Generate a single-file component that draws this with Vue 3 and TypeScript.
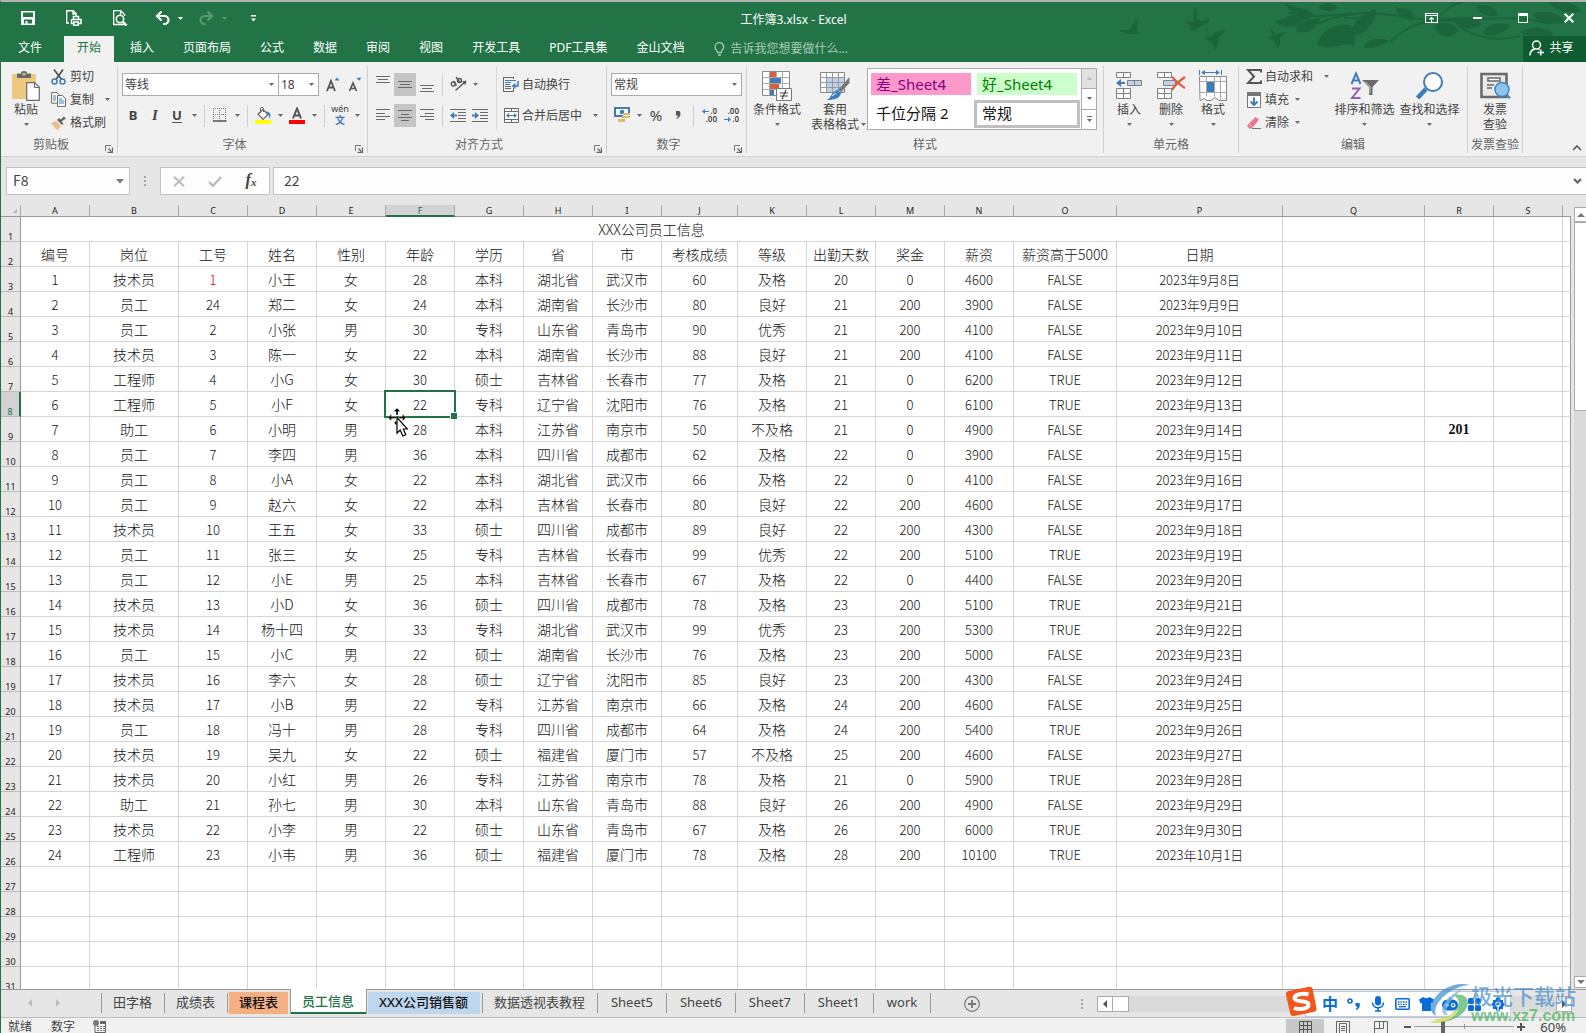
<script setup lang="ts">
import { h, ref, type FunctionalComponent } from 'vue'

interface Glyph { w: number; h: number; body: string }

const G = '#6a6a6a'
const B = '#3f7cba'

const glyphs: Record<string, Glyph> = {
  save: { w: 14, h: 14, body: '<path fill="#fff" fill-rule="evenodd" d="M0 0h14v14H0zM2 1.500v4.500h10v-4.500zM3 8.500v4h1.500v-2.500h2v2.500h4.500v-4z"/>' },
  print: { w: 16, h: 16, body: '<path d="M3 13H.7V.7h6.500l3 3V6M7 .7V4h3" fill="none" stroke="#fff" stroke-width="1.400"/><path d="M7.500 9V6.500h5V9M5.500 9.500h9.500v4H13M7.500 13.500h-2v-4M7.800 12h4.500v3.300H7.800z" fill="none" stroke="#fff" stroke-width="1.500"/>' },
  preview: { w: 15, h: 16, body: '<path d="M12 14.500H.7V.7h7l4 4V6M7.500.7v4" fill="none" stroke="#fff" stroke-width="1.300"/><circle cx="7" cy="9" r="3.700" fill="none" stroke="#fff" stroke-width="1.600"/><path d="M9.600 11.600l4 4" stroke="#fff" stroke-width="2.400"/>' },
  undo: { w: 15, h: 14, body: '<path d="M2 5h7.500a4 4 0 0 1 0 8H8" fill="none" stroke="#fff" stroke-width="2.200"/><path d="M6.500.5L2 5l4.500 4.500" fill="none" stroke="#fff" stroke-width="2.200"/>' },
  redo: { w: 15, h: 14, body: '<g opacity=".25"><path d="M13 5H5.500a4 4 0 0 0 0 8H7" fill="none" stroke="#fff" stroke-width="2.200"/><path d="M8.500.5L13 5 8.500 9.500" fill="none" stroke="#fff" stroke-width="2.200"/></g>' },
  customize: { w: 5, h: 7, body: '<path d="M0 0h5v1.400H0zM0 3.500h5L2.500 6.500z" fill="#fff"/>' },
  ribbonOpts: { w: 13, h: 10, body: '<path d="M.5.5h12v9H.5zM.5 2.500h12M6.500 9V4.500M4.300 6.500l2.200-2 2.200 2" fill="none" stroke="#fff" stroke-width="1.200"/>' },
  minimize: { w: 9, h: 2, body: '<path fill="#fff" d="M0 0h9v2H0z"/>' },
  maximize: { w: 10, h: 10, body: '<path fill="#fff" fill-rule="evenodd" d="M0 0h10v10H0zM1 3v6h8V3z"/>' },
  close: { w: 10, h: 10, body: '<path stroke="#fff" stroke-width="2" d="M.7.7l8.600 8.600M9.300.7L.7 9.300"/>' },
  bulb: { w: 11, h: 14, body: '<path d="M3.500 10.500c0-2-2.500-2.800-2.500-5.500a4.300 4.300 0 0 1 8.700 0c0 2.700-2.500 3.500-2.500 5.500zM4 13h3" fill="none" stroke="#a9cbb7" stroke-width="1.300"/>' },
  person: { w: 16, h: 16, body: '<circle cx="7.500" cy="5" r="4" fill="none" stroke="#fff" stroke-width="1.500"/><path d="M1 15.500c0-4 2.500-6 5-6.500M9.500 9l1 .8M8.500 12.500H15M11.800 9.500v6" fill="none" stroke="#fff" stroke-width="1.500"/>' },
  paste: { w: 28, h: 30, body: `<path d="M0 3h24v25H0z" fill="#edc87e"/><path d="M5 2.500h4c0-3.200 6-3.200 6 0h4V7H5z" fill="${G}"/><path d="M10.500 2.200h3v2h-3z" fill="#edc87e"/><path d="M14.700 11.700h8l4.600 4.600v13H14.700z" fill="#fff" stroke="${G}" stroke-width="1.200"/><path d="M22.500 12v4.500h4.500" fill="none" stroke="${G}"/>` },
  cut: { w: 16, h: 16, body: `<path d="M3 .5l7.500 10M12 .5l-7 10" stroke="#555" stroke-width="1.800"/><circle cx="3.500" cy="12.500" r="2.500" fill="none" stroke="${B}" stroke-width="1.500"/><circle cx="11.500" cy="12.500" r="2.500" fill="none" stroke="${B}" stroke-width="1.500"/>` },
  copy: { w: 16, h: 15, body: `<path d="M.6.6h5.500l2.500 2.500v8H.6z" fill="#fff" stroke="${G}"/><path d="M2 4h3M2 6h3M2 8h3" stroke="${B}"/><path d="M6.500 3.500h5l3 3v7.900h-8z" fill="#fff" stroke="${G}"/><path d="M8 7h3M8 9h5M8 11h5" stroke="${B}"/>` },
  brush: { w: 16, h: 14, body: '<path d="M0 7l5-2 5 5-3 4-2-1-1-1z" fill="#edc087"/><path d="M6 4l5 5 1.500-1.500-2-2L15 2.500 13 .5 9.500 3.500 8 2z" fill="#666"/>' },
  growA: { w: 14, h: 15, body: `<path d="M1 14L5 4l4 10M2.500 10.500h5" fill="none" stroke="#555" stroke-width="1.800"/><path d="M8.500 3.500h5L11 .5z" fill="${B}"/>` },
  shrinkA: { w: 14, h: 15, body: `<path d="M1.500 14L5 6l3.500 8M3 11.500h4" fill="none" stroke="#555" stroke-width="1.700"/><path d="M8.500.8h5L11 3.800z" fill="${B}"/>` },
  border: { w: 14, h: 14, body: `<path d="M.5 0v13M6.500 0v13M12.500 0v13M0 .5h13M0 6.500h13" stroke="#777" stroke-dasharray="1 1" shape-rendering="crispEdges"/><path d="M0 13h13.500" stroke="#555" stroke-width="1.500"/>` },
  fill: { w: 16, h: 17, body: `<path d="M3 7l5-4.500 5 5L8 12.500z" fill="#fff" stroke="#666" stroke-width="1.200"/><path d="M5.500 6V1.800a1.500 1.500 0 0 1 3 0V5" fill="none" stroke="#666"/><path d="M11 4.500c5 0 5 4 4 6.500-1.500-1-.5-4-4-5z" fill="${B}"/><path d="M0 13h16v4H0z" fill="#ff0"/>` },
  fontColor: { w: 16, h: 17, body: '<path d="M4 11.500L8 1.500l4 10M5.500 8.500h5" fill="none" stroke="#555" stroke-width="2"/><path d="M0 13h16v4H0z" fill="#f00"/>' },
  alTop: { w: 14, h: 9, body: `<path d="M0 1.500h14M2 4.500h10M0 7.500h14" stroke="${G}" shape-rendering="crispEdges"/>` },
  alLeft: { w: 14, h: 12, body: `<path d="M0 .5h14M0 4.500h9M0 7.500h14M0 10.500h9" stroke="${G}" shape-rendering="crispEdges"/>` },
  alCenter: { w: 14, h: 12, body: `<path d="M0 .5h14M3 4.500h8M0 7.500h14M3 10.500h8" stroke="${G}" shape-rendering="crispEdges"/>` },
  alRight: { w: 14, h: 12, body: `<path d="M0 .5h14M5 4.500h9M0 7.500h14M5 10.500h9" stroke="${G}" shape-rendering="crispEdges"/>` },
  orient: { w: 17, h: 16, body: '<g fill="none" stroke="#555" stroke-width="1.400"><circle cx="3.300" cy="8" r="2"/><path d="M3.500 5l3 4.500M6 1l4 5.500"/><circle cx="9.500" cy="4.500" r="2"/><path d="M5.500 14.500L15 6"/></g><path d="M16.500 4.500l-4.500 1 3.500 3.500z" fill="#555"/>' },
  outdent: { w: 16, h: 13, body: `<path d="M0 .5h16M8 3.500h8M8 6.500h8M8 9.500h8M0 12.500h16" stroke="${G}" shape-rendering="crispEdges"/><path d="M0 6.500L4 3v2.500h3v2H4V10z" fill="${B}"/>` },
  indent: { w: 16, h: 13, body: `<path d="M0 .5h16M8 3.500h8M8 6.500h8M8 9.500h8M0 12.500h16" stroke="${G}" shape-rendering="crispEdges"/><path d="M7 6.500L3 3v2.500H0v2h3V10z" fill="${B}"/>` },
  wrap: { w: 16, h: 15, body: `<path d="M.5 0v15M10.500 0v2M10.500 11v4M0 .5h11M0 14.500h11M2 9.500h6M2 11.500h6M2 7.500h5" stroke="${G}" fill="none"/><path d="M2 3.500h11M2 5.500h6" stroke="${B}"/><path d="M15 4v5h-4" fill="none" stroke="${B}" stroke-width="1.600"/><path d="M8.500 9l4-3v6z" fill="${B}"/>` },
  merge: { w: 15, h: 15, body: `<path d="M.5.5h14v14H.5zM0 3.500h15M0 11.500h15M7.500 0v3.500M7.500 11.500V15" fill="#fff" stroke="${G}"/><path d="M3 7.500h9" stroke="${B}"/><path d="M2 7.500L5 5v5zM13 7.500L10 5v5z" fill="${B}"/>` },
  currency: { w: 16, h: 16, body: `<path d="M1 1h14v8H1z" fill="#fff" stroke="${B}" stroke-width="2"/><circle cx="8" cy="5" r="2.300" fill="${B}"/><path d="M9 6h7v2H9zM8 9h7v2H8zM4 12h7v3H4z" fill="#e6b866"/><path d="M9 8.500h7M7.500 11.500h7M4 15.500h7" stroke="#f1f1f1"/>` },
  comma: { w: 6, h: 8, body: '<path d="M1 0h3.500C6.500 2 5.500 6 2 8l-.6-.8C3 6 3.200 5 3 4.500H1z" fill="#555"/>' },
  arrowL: { w: 7, h: 5, body: `<path d="M0 2.500L3 0v2h4v1H3v2z" fill="${B}"/>` },
  arrowR: { w: 7, h: 5, body: `<path d="M7 2.500L4 0v2H0v1h4v2z" fill="${B}"/>` },
  condFmt: { w: 30, h: 30, body: '<path d="M.5.500h27v24H.5z" fill="#fff" stroke="#888"/><path d="M.5 6.500h27M.5 12.500h27M.5 18.500h27M7.500.5v24M20.500.5v24M14.500.5v24" stroke="#aaa"/><path d="M8 1h6v5H8zM8 13h9v5H8z" fill="#d9603f"/><path d="M8 7h11v5H8zM8 19h4v5H8z" fill="#3f7cba"/><path d="M14.500 17.500h15v12h-15z" fill="#fff" stroke="#777"/><path d="M18 22h8M18 25h8M24 19l-4 9" stroke="#444" stroke-width="1.200"/>' },
  tableFmt: { w: 30, h: 28, body: '<path d="M.5.500h24v20H.5z" fill="#fff" stroke="#888"/><path d="M7 6h17v14H7z" fill="#bdd2ea"/><path d="M.5 5.500h24M.5 10.500h24M.5 15.500h24M6.500.5v20M12.500.5v20M18.500.5v20" stroke="#999"/><path d="M29.500 5v6L21 20l-3-2z" fill="#777"/><path d="M17 18l4 3c-1 5-6 7-14 7 5-3 4-8 10-10z" fill="#3f7cba"/><path d="M12 24l4-3" stroke="#fff"/>' },
  insertCells: { w: 26, h: 28, body: `<g fill="#fff" stroke="#808080"><path d="M.5.500h14v5H.5zM7.500.5v5M.5 16.500h14v10H.5zM7.500 16.500v10M.5 21.500h14"/><path d="M11.500 8.500h14v5h-14zM18.500 8.500v5" fill="#bdd2ea"/></g><path d="M0 11L5 7v3h4v2H5v3z" fill="${B}"/>` },
  deleteCells: { w: 29, h: 28, body: `<g fill="#fff" stroke="#808080"><path d="M.5.500h14v5H.5zM7.500.5v5M.5 16.500h14v10H.5zM7.500 16.500v10M.5 21.500h14"/><path d="M6.500 8.500h12v5h-12z" fill="#bdd2ea"/></g><path d="M15 5c5 5 9 9 13 11M28 5c-6 4-10 8-13 13" fill="none" stroke="#d9603f" stroke-width="2.400"/>` },
  formatCells: { w: 28, h: 32, body: `<path d="M.5 0v5M22.500 0v5" stroke="${B}"/><path d="M4 2.500h15" stroke="${B}"/><path d="M2 2.500L6 0v5zM21 2.500L17 0v5z" fill="${B}"/><path d="M.5 6.500h27v24H20l-4-3-4 3H8l-3-2-4 2z" fill="#fff" stroke="#888"/><path d="M.5 11.500h27M.5 22.500h27M7.500 6.500v20M15.500 6.500v20M21.500 6.500v24" stroke="#aaa"/><path d="M8 12h7v10H8z" fill="${B}"/>` },
  sum: { w: 16, h: 15, body: '<path d="M15 3.500V1H2l6 6.500L2 14h13v-2.500" fill="none" stroke="#555" stroke-width="2"/>' },
  fillDown: { w: 14, h: 16, body: `<path d="M.5.500h13v15H.5z" fill="#fff" stroke="#777"/><path d="M0 0h14v4H0z" fill="#777"/><path d="M7 5.500v7M3.500 9.500L7 13l3.500-3.500" fill="none" stroke="${B}" stroke-width="2"/>` },
  erase: { w: 14, h: 14, body: '<path d="M0 9.500L8.500 1 12 3.500 5 12.500H2z" fill="#e5798d"/><path d="M2 8l3.500 3" stroke="#f4c0c8"/><path d="M5 12.500h9" stroke="#777"/>' },
  sortFilter: { w: 30, h: 28, body: `<path d="M1.500 12L6 1.500 10.500 12M3 8.500h6" fill="none" stroke="${B}" stroke-width="2"/><path d="M2 16.500h7.500L2 26h8.500" fill="none" stroke="#9160b5" stroke-width="2"/><path d="M12 8h17l-6.500 7v8h-3.500v-8z" fill="#6a6a6a"/><path d="M15 9.500l5 5v7" fill="none" stroke="#ccc"/>` },
  find: { w: 28, h: 28, body: `<circle cx="17" cy="10" r="9" fill="#fff" stroke="${B}" stroke-width="2"/><path d="M10 17l-8.500 9" stroke="${B}" stroke-width="4.500"/>` },
  invoice: { w: 31, h: 27, body: '<path d="M1.500 1.500h25v23h-25z" fill="#e8e8e8" stroke="#6a6a6a" stroke-width="2.600"/><path d="M3.500 3v20" stroke="#fff" stroke-dasharray="2 2"/><path d="M8 5.500h12v3H8z" fill="#fff" stroke="#6a6a6a" stroke-width="1.600"/><path d="M7 12.500h7M7 15.500h5" stroke="#6a6a6a" stroke-width="1.400"/><circle cx="22" cy="17" r="7" fill="#8fc4f0" stroke="#3e86bd" stroke-width="1.500"/><path d="M27 22l3 4" stroke="#3e86bd" stroke-width="2"/>' },
  launcher: { w: 8, h: 8, body: '<path d="M.5 6V.5H6" fill="none" stroke="#777"/><path d="M7.500 2.500v5h-5M3.500 3.500l3 3" fill="none" stroke="#666" stroke-width="1.400"/>' },
  caretUp: { w: 10, h: 6, body: '<path d="M1 5l4-4 4 4" fill="none" stroke="#555" stroke-width="1.600"/>' },
  caretDown: { w: 9, h: 6, body: '<path d="M1 1l3.500 3.500L8 1" fill="none" stroke="#666" stroke-width="2.200"/>' },
  cancel: { w: 12, h: 11, body: '<path d="M1 .8l10 9.400M11 .8L1 10.200" stroke="#bbb" stroke-width="2"/>' },
  confirm: { w: 14, h: 11, body: '<path d="M1 6l4 3.800L13 1" fill="none" stroke="#bbb" stroke-width="2.400"/>' },
  status: { w: 13, h: 13, body: '<path d="M2 5v7.500h10.500V1.500H8" fill="none" stroke="#666"/><path d="M7 1h6v3H7z" fill="#666"/><circle cx="3" cy="3" r="3" fill="#777"/><path d="M4 6.500h8M4 8.500h8M4 10.500h8" stroke="#777" stroke-dasharray="2 1"/>' },
  viewNormal: { w: 13, h: 13, body: '<path d="M.5.500h12v12H.5zM4.500.5v12M8.500.5v12M.5 4.500h12M.5 8.500h12" fill="none" stroke="#555"/>' },
  viewPage: { w: 14, h: 13, body: '<path d="M.5.500h13v12H.5z" fill="none" stroke="#666"/><path d="M3.500 2.500h7v10h-7zM5 5.500h4M5 7.500h4M5 9.500h4" fill="none" stroke="#666"/>' },
  viewBreak: { w: 14, h: 13, body: '<path d="M.5 13V.5h13V13M5.500.5v7M9.500.5v7M.5 7.500h9" fill="none" stroke="#666"/>' },
  plus: { w: 16, h: 16, body: '<circle cx="8" cy="8" r="7.300" fill="none" stroke="#777" stroke-width="1.200"/><path d="M4 8h8M8 4v8" stroke="#777" stroke-width="1.800"/>' },
  imeLogo: { w: 32, h: 31, body: '<path d="M4 5L24 .8q3-.6 3.600 2.200L31.500 22q.5 3-2.400 3.700L9 30q-3 .6-3.700-2.200L.9 8.500Q.5 5.700 4 5z" fill="#f4551c"/><path d="M23.500 8.500C18 6.500 9 8.500 9.500 12.500S23 14 23.500 18.500 14 24 9 22" fill="none" stroke="#fff" stroke-width="4"/>' },
  imePunct: { w: 14, h: 14, body: '<circle cx="3" cy="4" r="2" fill="none" stroke="#0a6cd6" stroke-width="1.600"/><path d="M8.500 6h4c1 3 0 5.500-3 7l-.8-1c1-.6 1.600-1.500 1.500-2.500H8.500z" fill="#0a6cd6"/>' },
  imeMic: { w: 14, h: 16, body: '<rect x="4" y="0" width="6" height="9.500" rx="3" fill="#0a6cd6"/><path d="M1.500 6.500c0 7 11 7 11 0M7 12v3M4 15h6" fill="none" stroke="#0a6cd6" stroke-width="1.600"/>' },
  imeKeys: { w: 15, h: 12, body: '<rect x=".8" y=".8" width="13.400" height="10.400" rx="1" fill="none" stroke="#0a6cd6" stroke-width="1.600"/><path d="M3 4h9M3 6.300h9" stroke="#0a6cd6" stroke-width="1.300" stroke-dasharray="1.500 1"/><path d="M4 8.700h7" stroke="#0a6cd6" stroke-width="1.300"/>' },
  imeShirt: { w: 15, h: 14, body: '<path d="M4.500 0q3 2.500 6 0L15 2.500 13.500 6.500 12 6v8H3V6l-1.500.5L0 2.500z" fill="#0a6cd6"/>' },
  imeBot: { w: 16, h: 14, body: '<path d="M7.200 0h1.600v3H7.200z" fill="#0a6cd6"/><rect x="0" y="2.500" width="16" height="11" rx="5.500" fill="#0a6cd6"/><path d="M2.800 8.200h4M4.800 6.200v4" stroke="#fff" stroke-width="1.200"/><circle cx="11.200" cy="8.200" r="1.700" fill="none" stroke="#fff" stroke-width="1.200"/>' },
  imeGrid: { w: 13, h: 13, body: '<rect width="6" height="6" rx="1.500" fill="#0a6cd6"/><circle cx="10" cy="3" r="3" fill="#0a6cd6"/><rect y="7" width="6" height="6" rx="1.500" fill="#0a6cd6"/><rect x="7" y="7" width="6" height="6" rx="1.500" fill="#0a6cd6"/>' },
  imeGear: { w: 14, h: 15, body: '<path d="M5 1l2-1 2 1 .5 2h2.500v2.500L14 7.500 12 9.500V12H9.500L8 14.500H6L4.500 12H2V9.500L0 7.500l2-2V3h2.500z" fill="#0a6cd6"/><path d="M7 14V8M4.800 8a2.300 2.300 0 1 1 4.400 0L7 10z" fill="none" stroke="#fff" stroke-width="1.200"/>' },
}

const Icon: FunctionalComponent<{ name: string }> = (props) => {
  const g = glyphs[props.name]
  return h('svg', { width: g.w, height: g.h, viewBox: `0 0 ${g.w} ${g.h}`, 'aria-hidden': 'true', innerHTML: g.body })
}
Icon.props = ['name']

const Arrow: FunctionalComponent = () =>
  h('svg', { width: 5, height: 3, viewBox: '0 0 5 3', 'aria-hidden': 'true', innerHTML: '<path d="M0 0h5L2.500 3z" fill="currentColor"/>' })

const menuTabs = ['文件', '开始', '插入', '页面布局', '公式', '数据', '审阅', '视图', '开发工具', 'PDF工具集', '金山文档']
const activeMenu = ref('开始')

const columns = [
  ['A', 69], ['B', 89], ['C', 69], ['D', 69], ['E', 69], ['F', 69], ['G', 69], ['H', 69], ['I', 69], ['J', 76],
  ['K', 69], ['L', 69], ['M', 69], ['N', 69], ['O', 103], ['P', 166], ['Q', 142], ['R', 69], ['S', 69],
] as [string, number][]

const heads = '编号 岗位 工号 姓名 性别 年龄 学历 省 市 考核成绩 等级 出勤天数 奖金 薪资 薪资高于5000 日期'
const records = `1 技术员 1 小王 女 28 本科 湖北省 武汉市 60 及格 20 0 4600 FALSE 2023年9月8日
2 员工 24 郑二 女 24 本科 湖南省 长沙市 80 良好 21 200 3900 FALSE 2023年9月9日
3 员工 2 小张 男 30 专科 山东省 青岛市 90 优秀 21 200 4100 FALSE 2023年9月10日
4 技术员 3 陈一 女 22 本科 湖南省 长沙市 88 良好 21 200 4100 FALSE 2023年9月11日
5 工程师 4 小G 女 30 硕士 吉林省 长春市 77 及格 21 0 6200 TRUE 2023年9月12日
6 工程师 5 小F 女 22 专科 辽宁省 沈阳市 76 及格 21 0 6100 TRUE 2023年9月13日
7 助工 6 小明 男 28 本科 江苏省 南京市 50 不及格 21 0 4900 FALSE 2023年9月14日
8 员工 7 李四 男 36 本科 四川省 成都市 62 及格 22 0 3900 FALSE 2023年9月15日
9 员工 8 小A 女 22 本科 湖北省 武汉市 66 及格 22 0 4100 FALSE 2023年9月16日
10 员工 9 赵六 女 22 本科 吉林省 长春市 80 良好 22 200 4600 FALSE 2023年9月17日
11 技术员 10 王五 女 33 硕士 四川省 成都市 89 良好 22 200 4300 FALSE 2023年9月18日
12 员工 11 张三 女 25 专科 吉林省 长春市 99 优秀 22 200 5100 TRUE 2023年9月19日
13 员工 12 小E 男 25 本科 吉林省 长春市 67 及格 22 0 4400 FALSE 2023年9月20日
14 技术员 13 小D 女 36 硕士 四川省 成都市 78 及格 23 200 5100 TRUE 2023年9月21日
15 技术员 14 杨十四 女 33 专科 湖北省 武汉市 99 优秀 23 200 5300 TRUE 2023年9月22日
16 员工 15 小C 男 22 硕士 湖南省 长沙市 76 及格 23 200 5000 FALSE 2023年9月23日
17 技术员 16 李六 女 28 硕士 辽宁省 沈阳市 85 良好 23 200 4300 FALSE 2023年9月24日
18 技术员 17 小B 男 22 专科 江苏省 南京市 66 及格 24 200 4600 FALSE 2023年9月25日
19 员工 18 冯十 男 28 专科 四川省 成都市 64 及格 24 200 5400 TRUE 2023年9月26日
20 技术员 19 吴九 女 22 硕士 福建省 厦门市 57 不及格 25 200 4600 FALSE 2023年9月27日
21 技术员 20 小红 男 26 专科 江苏省 南京市 78 及格 21 0 5900 TRUE 2023年9月28日
22 助工 21 孙七 男 30 本科 山东省 青岛市 88 良好 26 200 4900 FALSE 2023年9月29日
23 技术员 22 小李 男 22 硕士 山东省 青岛市 67 及格 26 200 6000 TRUE 2023年9月30日
24 工程师 23 小韦 男 36 硕士 福建省 厦门市 78 及格 28 200 10100 TRUE 2023年10月1日`

const body: string[][] = [heads, ...records.split('\n')].map((line) => line.split(' '))
const rows = Array.from({ length: 30 }, (_, i) => {
  const cells = [...(body[i] ?? [])]
  while (cells.length < 20) cells.push('')
  if (i + 2 === 9) cells[17] = '201'
  return { no: i + 2, cells }
})

const selected = { row: 8, col: 5 }
const isNumeric = (v: string) => /^[0-9A-Z]/.test(v)

const sheets = [
  { name: '田字格', kind: 'plain' }, { name: '成绩表', kind: 'plain' }, { name: '课程表', kind: 'tint orange' },
  { name: '员工信息', kind: 'active' }, { name: 'XXX公司销售额', kind: 'tint blue' }, { name: '数据透视表教程', kind: 'plain' },
  { name: 'Sheet5', kind: 'plain latin' }, { name: 'Sheet6', kind: 'plain latin' }, { name: 'Sheet7', kind: 'plain latin' },
  { name: 'Sheet1', kind: 'plain latin' }, { name: 'work', kind: 'plain latin' },
]
const imeIcons = ['imePunct', 'imeMic', 'imeKeys', 'imeShirt', 'imeBot', 'imeGrid', 'imeGear']
const formula = ref('22')
const cellRef = ref('F8')
const fontName = ref('等线')
const fontSize = ref('18')
const numFormat = ref('常规')
</script>

<template>
  <div class="app">
    <header class="top">
      <svg class="foliage" width="466" height="56" viewBox="0 0 466 56" aria-hidden="true">
        <path fill="#1c653c" d="M21 15c-2 7-5 12-8 13-6 0-8 0-12-1 5 3 7 4 14 5 3 1 9 0 11-1-4-1-5-2-4-5 1-5 0-8-1-11z" transform="translate(-5)" />
        <g fill="#1c653c" transform="translate(28)">
          <path d="M46 4c3 4 4 8 2 12l5 3c3 0 6-1 8-3 0 5-4 8-9 8-3 3-6 5-11 5l2-4-6-6 8 1c1-5 0-10 1-16z" />
          <path d="M59 25c0 4 1 8 5 9 3-5 8-6 14-5-4 3-7 5-8 9 0 5 0 8-3 10-2-4-3-6-3-8l-8-4 7-1c-4-3-6-6-4-10z" />
          <path d="M124 25c0 4 1 6 4 8 3-2 7-3 11-2-3 2-6 3-7 6 0 4 0 7-2 9-3-3-3-5-3-7l-8-4 7-1c-3-3-4-5-2-9z" />
          <path d="M136 2c10 2 22 4 30 11-10 3-22-2-30-11zM138 15c8-3 18-3 26 0-8 6-20 5-26 0zM126 20c10-5 22-4 30 1-8 5-22 5-30-1zM148 29c1-8 10-12 24-13-2 9-12 18-24 13zM169 43c4-14 14-21 33-20 8 8 4 17 4 21-8-5-22 5-37-1zM200 35c4-12 12-24 28-28-2 16-10 26-28 28zM215 46c4-8 14-12 26-7-8 5-17 8-26 7zM246 5c12 1 20 3 21 13-12 0-16-6-21-13zM170 5c8-5 14-5 20 1-6 4-14 4-20-1zM328 4c10-3 20 0 22 9-10 3-18-1-22-9zM306 20c8-6 20-5 28 2-6 6-20 6-28-2zM335 32c2-8 14-14 27-8-4 6-18 12-27 8zM287 24c4-4 16-5 24 4-6 10-22 8-24-4zM384 12c14-4 26-2 34 8-16 4-28 0-34-8zM400 0c14-2 26 0 34 10-16 2-28-2-34-10zM372 30c12-6 26-6 34 2-12 6-24 4-34-2z" />
        </g>
        <g fill="none" stroke="#1c653c" stroke-width="2">
          <path d="M168 10c30 10 60-2 96 2s40 8 78 6 60-4 88 4M196 22c26-10 44-12 70-10M224 16c10 0 18 2 24-2M270 40c20-22 50-24 90-24M318 16c10-10 14-14 24-16M340 24c14 12 40 16 60 10" />
        </g>
      </svg>
      <div class="titlebar">
        <div class="qat">
          <button class="q wide" aria-label="保存"><Icon name="save" /></button>
          <button class="q wide" aria-label="快速打印"><Icon name="print" /></button>
          <button class="q wide" aria-label="打印预览"><Icon name="preview" /></button>
          <button class="q step" aria-label="撤消"><Icon name="undo" /></button>
          <button class="q drop" aria-label="撤消选项"><Arrow /></button>
          <button class="q step" aria-label="恢复"><Icon name="redo" /></button>
          <button class="q drop dim" aria-label="恢复选项"><Arrow /></button>
          <button class="q more" aria-label="自定义快速访问工具栏"><Icon name="customize" /></button>
        </div>
        <h1>工作簿3.xlsx - Excel</h1>
        <div class="window">
          <button class="q" aria-label="功能区显示选项"><Icon name="ribbonOpts" /></button>
          <button class="q" aria-label="最小化"><Icon name="minimize" /></button>
          <button class="q" aria-label="最大化"><Icon name="maximize" /></button>
          <button class="q" aria-label="关闭"><Icon name="close" /></button>
        </div>
      </div>
      <nav class="menu">
        <button v-for="t in menuTabs" :key="t" :class="{ on: t === activeMenu }" @click="activeMenu = t">{{ t }}</button>
        <label class="tell"><Icon name="bulb" /><input type="text" placeholder="告诉我您想要做什么..." aria-label="告诉我您想要做什么" /></label>
        <button class="share"><Icon name="person" /><span>共享</span></button>
      </nav>
    </header>

    <section class="ribbon">
      <div class="group clipboard">
        <div class="content">
          <button class="big paste"><Icon name="paste" /><span>粘贴</span><Arrow /></button>
          <div class="stack">
            <button class="small"><i><Icon name="cut" /></i>剪切</button>
            <button class="small far"><i><Icon name="copy" /></i>复制<Arrow /></button>
            <button class="small"><i><Icon name="brush" /></i>格式刷</button>
          </div>
        </div>
        <footer>剪贴板<button class="launch" aria-label="剪贴板设置"><Icon name="launcher" /></button></footer>
      </div>

      <div class="group font">
        <div class="content rows">
          <div class="line">
            <span class="pick name"><select v-model="fontName" aria-label="字体"><option>等线</option></select><Arrow /></span>
            <span class="pick size"><select v-model="fontSize" aria-label="字号"><option>18</option></select><Arrow /></span>
            <button class="tool" aria-label="增大字号"><Icon name="growA" /></button>
            <button class="tool" aria-label="减小字号"><Icon name="shrinkA" /></button>
          </div>
          <div class="line">
            <button class="tool"><b>B</b></button>
            <button class="tool"><b class="it">I</b></button>
            <button class="tool"><b class="un">U</b></button>
            <button class="arr" aria-label="下划线选项"><Arrow /></button><hr />
            <button class="tool" aria-label="边框"><Icon name="border" /></button>
            <button class="arr" aria-label="边框选项"><Arrow /></button><hr />
            <button class="tool" aria-label="填充颜色"><Icon name="fill" /></button>
            <button class="arr" aria-label="填充颜色选项"><Arrow /></button>
            <button class="tool" aria-label="字体颜色"><Icon name="fontColor" /></button>
            <button class="arr" aria-label="字体颜色选项"><Arrow /></button><hr />
            <button class="tool wen"><span>wén</span><span class="zh">文</span></button>
            <button class="arr" aria-label="拼音选项"><Arrow /></button>
          </div>
        </div>
        <footer>字体<button class="launch" aria-label="字体设置"><Icon name="launcher" /></button></footer>
      </div>

      <div class="group align">
        <div class="content">
          <div class="rows">
            <div class="line">
              <button class="tool up" aria-label="顶端对齐"><Icon name="alTop" /></button>
              <button class="tool on" aria-label="垂直居中"><Icon name="alTop" /></button>
              <button class="tool down" aria-label="底端对齐"><Icon name="alTop" /></button><hr />
              <button class="tool" aria-label="方向"><Icon name="orient" /></button>
              <button class="arr" aria-label="方向选项"><Arrow /></button>
            </div>
            <div class="line">
              <button class="tool" aria-label="左对齐"><Icon name="alLeft" /></button>
              <button class="tool on" aria-label="居中"><Icon name="alCenter" /></button>
              <button class="tool" aria-label="右对齐"><Icon name="alRight" /></button><hr />
              <button class="tool" aria-label="减少缩进量"><Icon name="outdent" /></button>
              <button class="tool" aria-label="增加缩进量"><Icon name="indent" /></button>
            </div>
          </div>
          <div class="rows texted">
            <button class="line small"><i><Icon name="wrap" /></i>自动换行</button>
            <button class="line small far"><i><Icon name="merge" /></i>合并后居中<Arrow /></button>
          </div>
        </div>
        <footer>对齐方式<button class="launch" aria-label="对齐设置"><Icon name="launcher" /></button></footer>
      </div>

      <div class="group number">
        <div class="content rows">
          <div class="line">
            <span class="pick fmt"><select v-model="numFormat" aria-label="数字格式"><option>常规</option></select><Arrow /></span>
          </div>
          <div class="line">
            <button class="tool" aria-label="会计数字格式"><Icon name="currency" /></button>
            <button class="arr" aria-label="会计格式选项"><Arrow /></button>
            <button class="tool pct">%</button>
            <button class="tool" aria-label="千位分隔样式"><Icon name="comma" /></button><hr />
            <button class="tool dec"><span><Icon name="arrowL" />.0</span><span>.00</span></button>
            <button class="tool dec"><span>.00</span><span><Icon name="arrowR" />.0</span></button>
          </div>
        </div>
        <footer>数字<button class="launch" aria-label="数字设置"><Icon name="launcher" /></button></footer>
      </div>

      <div class="group styles">
        <div class="content">
          <button class="big"><Icon name="condFmt" /><span>条件格式</span><Arrow /></button>
          <button class="big tbl"><Icon name="tableFmt" /><span>套用</span><span class="last">表格格式<Arrow /></span></button>
          <div class="gallery">
            <div class="swatches">
              <button class="bad">差_Sheet4</button>
              <button class="good">好_Sheet4</button>
              <button class="low">千位分隔 2</button>
              <button class="low cur">常规</button>
            </div>
            <div class="gscroll">
              <button class="off" aria-label="上一行"><Arrow class="flip" /></button>
              <button aria-label="下一行"><Arrow /></button>
              <button class="all" aria-label="其他"><Arrow /></button>
            </div>
          </div>
        </div>
        <footer>样式</footer>
      </div>

      <div class="group cells">
        <div class="content">
          <button class="big"><Icon name="insertCells" /><span>插入</span><Arrow /></button>
          <button class="big"><Icon name="deleteCells" /><span>删除</span><Arrow /></button>
          <button class="big"><Icon name="formatCells" /><span>格式</span><Arrow /></button>
        </div>
        <footer>单元格</footer>
      </div>

      <div class="group edit">
        <div class="content">
          <div class="stack">
            <button class="small far"><i><Icon name="sum" /></i>自动求和<Arrow /></button>
            <button class="small"><i><Icon name="fillDown" /></i>填充<Arrow /></button>
            <button class="small"><i><Icon name="erase" /></i>清除<Arrow /></button>
          </div>
          <button class="big"><Icon name="sortFilter" /><span>排序和筛选</span><Arrow /></button>
          <button class="big"><Icon name="find" /><span>查找和选择</span><Arrow /></button>
        </div>
        <footer>编辑</footer>
      </div>

      <div class="group invoice">
        <div class="content">
          <button class="big"><Icon name="invoice" /><span>发票</span><span class="last">查验</span></button>
        </div>
        <footer>发票查验</footer>
      </div>
      <button class="collapse" aria-label="折叠功能区"><Icon name="caretUp" /></button>
    </section>

    <section class="formula">
      <label class="ref"><input v-model="cellRef" type="text" aria-label="名称框" /><svg width="8" height="5" viewBox="0 0 8 5"><path d="M0 0h8L4 4.500z" fill="#777" /></svg></label>
      <span class="dots"><i></i><i></i><i></i></span>
      <div class="fx">
        <button aria-label="取消"><Icon name="cancel" /></button>
        <button aria-label="输入"><Icon name="confirm" /></button>
        <button class="f"><em>f</em><em class="x">x</em></button>
      </div>
      <label class="entry"><input v-model="formula" type="text" aria-label="编辑栏" /><Icon name="caretDown" /></label>
    </section>

    <main class="sheet">
      <div class="grid">
        <table>
          <colgroup>
            <col class="rowcol" />
            <col v-for="[c, w] in columns" :key="c" :style="{ width: w + 'px' }" />
            <col />
          </colgroup>
          <thead>
            <tr>
              <th class="corner"><svg width="4" height="4" viewBox="0 0 4 4"><path d="M4 0v4H0z" fill="#b5b5b5" /></svg></th>
              <th v-for="([c], i) in columns" :key="c" scope="col" :class="{ sel: i === selected.col }">{{ c }}</th>
              <th></th>
            </tr>
          </thead>
          <tbody>
            <tr>
              <th scope="row">1</th>
              <td colspan="16">XXX公司员工信息</td>
              <td v-for="n in 4" :key="n"></td>
            </tr>
            <tr v-for="r in rows" :key="r.no">
              <th scope="row" :class="{ sel: r.no === selected.row }">{{ r.no }}</th>
              <td
                v-for="(v, i) in r.cells"
                :key="i"
                :class="{ num: isNumeric(v), red: r.no === 3 && i === 2, serif: i === 17, picked: r.no === selected.row && i === selected.col }"
              >{{ v }}<svg v-if="r.no === selected.row && i === selected.col" class="cursor" width="20" height="29" viewBox="0 0 20 29" aria-hidden="true">
                <path d="M9 9.500v15.500l3.200-3 2.600 6 3-1.300-2.500-5.700h4.200z" fill="#fff" stroke="#000" stroke-width="1.200" />
                <path d="M9 0l3.500 3.500H10V7H8V3.500H5.500zM0 9.500L3.500 6v2.500H8v2H3.500V13zM18 9.500L14.500 6v2.500H11v2h3.500V13z" fill="#000" stroke="#fff" stroke-width=".4" />
                <path d="M7 13.500h1.500v4L6.500 15z" fill="#000" />
              </svg></td>
            </tr>
          </tbody>
        </table>
      </div>
      <div class="vscroll">
        <button aria-label="向上滚动"><svg width="8" height="4" viewBox="0 0 8 4"><path d="M0 4h8L4 0z" fill="#777" /></svg></button>
        <div class="track"><div class="thumb"></div></div>
        <button aria-label="向下滚动"><svg width="8" height="4" viewBox="0 0 8 4"><path d="M0 0h8L4 4z" fill="#777" /></svg></button>
      </div>
    </main>

    <section class="tabs">
      <div class="nav">
        <button aria-label="上一张"><svg width="4" height="8" viewBox="0 0 4 8"><path d="M4 0v8L0 4z" fill="#bbb" /></svg></button>
        <button aria-label="下一张"><svg width="4" height="8" viewBox="0 0 4 8"><path d="M0 0v8l4-4z" fill="#bbb" /></svg></button>
      </div>
      <ul>
        <li v-for="s in sheets" :key="s.name" :class="s.kind"><button>{{ s.name }}</button></li>
      </ul>
      <button class="add" aria-label="新工作表"><Icon name="plus" /></button>
      <span class="dots"><i></i><i></i><i></i></span>
      <div class="hscroll">
        <button aria-label="向左滚动"><svg width="4" height="8" viewBox="0 0 4 8"><path d="M4 0v8L0 4z" fill="#555" /></svg></button>
        <div class="hthumb"></div>
        <button class="end" aria-label="向右滚动"><svg width="4" height="8" viewBox="0 0 4 8"><path d="M0 0v8l4-4z" fill="#555" /></svg></button>
      </div>
    </section>

    <footer class="status">
      <span>就绪</span><span>数字</span><Icon name="status" />
      <div class="views">
        <button class="on" aria-label="普通"><Icon name="viewNormal" /></button>
        <button aria-label="页面布局视图"><Icon name="viewPage" /></button>
        <button aria-label="分页预览"><Icon name="viewBreak" /></button>
      </div>
      <button class="zoom" aria-label="缩小"><svg width="7" height="2" viewBox="0 0 7 2"><path d="M0 0h7v2H0z" fill="#555" /></svg></button>
      <input class="slider" type="range" min="10" max="190" value="60" aria-label="显示比例" />
      <button class="zoom" aria-label="放大"><svg width="8" height="8" viewBox="0 0 8 8"><path d="M3 0h2v3h3v2H5v3H3V5H0V3h3z" fill="#555" /></svg></button>
      <span class="pctg">60%</span>
    </footer>

    <aside class="ime">
      <Icon name="imeLogo" class="logo" />
      <div class="imebar">
        <span class="zh">中</span>
        <span v-for="n in imeIcons" :key="n"><Icon :name="n" /></span>
      </div>
    </aside>

    <aside class="mark">
      <svg width="44" height="42" viewBox="0 0 44 42" aria-hidden="true">
        <path d="M41 2C26-2 8 6 2 22c-1 5 1 9 5 11-2-6 0-12 6-18C21 7 30 3 41 2z" fill="#3f8fd2" />
        <path d="M38 4C25 8 14 18 13 27c0 4 3 6 6 5-3-3-2-8 3-14 5-7 10-11 16-14z" fill="#7fb6e2" />
        <path d="M24 12c12-2 17 4 14 12C34 34 20 40 2 40c12-3 21-7 26-15 3-6 2-10-4-13z" fill="#4fb463" />
        <path d="M2 40c3-4 8-4 14-6 6-2 11-5 14-9-2 9-14 16-28 15z" fill="#d3dc55" />
      </svg>
      <div><strong>极光下载站</strong><span>www.xz7.com</span></div>
    </aside>
  </div>
</template>

<style>
body { margin: 0; }
</style>

<style scoped>
.app, .app * { box-sizing: border-box; }
.app {
  position: relative;
  display: flex;
  flex-direction: column;
  height: 100vh;
  overflow: hidden;
  border-top: 2px solid #b4b4b4;
  border-left: 1px solid #217346;
  background: #e6e6e6;
  color: #444;
  font: 12px/16px "Noto Sans", "Noto Sans CJK SC", sans-serif;
}
button, input, select { font: inherit; color: inherit; border: 0; padding: 0; margin: 0; background: none; border-radius: 0; }
svg { display: block; flex: none; }
button { display: flex; align-items: center; justify-content: center; white-space: nowrap; }

.top { position: relative; flex: none; background: #227447; color: #fff; }
.foliage { position: absolute; right: 0; top: 0; }
.titlebar { position: relative; display: flex; justify-content: space-between; height: 34px; }
h1 { position: absolute; left: 0; right: 0; top: 10px; margin: 0; text-align: center; font-size: 12px; font-weight: 400; line-height: 16px; pointer-events: none; }
.qat, .window { display: flex; align-items: center; height: 32px; }
.qat { padding-left: 4px; }
.q { width: 30px; height: 28px; }
.q.wide { width: 46px; }
.q.step { padding-left: 8px; }
.q.drop { width: 14px; }
.q.dim { opacity: .25; }
.q.more { width: 44px; }
.window .q { width: 46px; }
.window { margin-right: -6px; }

.menu { position: relative; display: flex; height: 26px; }
.menu > button { height: 26px; padding: 0 13px 2px; margin-right: 3px; }
.menu > button:first-child { margin: 0 9px 0 4px; }
.menu > .on { background: #f1f1f1; color: #217346; }
.tell { display: flex; align-items: center; gap: 5px; margin-left: 14px; color: #a9cbb7; }
.tell input { width: 160px; outline: 0; }
.tell input::placeholder { color: #a9cbb7; opacity: 1; }
.menu > .share { width: 63px; margin: 0 0 0 auto; padding: 0 6px 2px 0; gap: 4px; background: #0f5c31; }

.ribbon { display: flex; flex: none; height: 95px; padding-top: 4px; background: #f1f1f1; border-bottom: 1px solid #d2d2d2; }
.group { display: flex; flex: none; flex-direction: column; height: 87px; border-right: 1px solid #d0d0d0; }
.content { display: flex; height: 71px; }
.group footer { position: relative; height: 16px; text-align: center; color: #666; }
.launch { position: absolute; right: 4px; top: 8px; }
.clipboard { width: 117px; }
.clipboard footer { padding-right: 16px; }
.font { width: 250px; }
.font footer, .number footer { padding-right: 16px; }
.align { width: 239px; }
.align footer { padding-right: 16px; }
.number { width: 140px; }
.styles { width: 357px; }
.cells { width: 135px; }
.edit { width: 229px; }
.invoice { width: 55px; }
.group svg { color: #6a6a6a; }

.big { position: relative; flex-direction: column; justify-content: flex-start; width: 42px; padding-top: 4px; line-height: 16px; }
.big > svg:first-child { height: 32px; }
.big > svg:last-child { margin-top: 5px; }
.paste { width: 46px; margin: 0 2px 0 2px; }
.stack { display: flex; flex-direction: column; }
.small { justify-content: flex-start; height: 23px; gap: 3px; padding-bottom: 2px; }
.small i { display: flex; justify-content: center; width: 16px; }
.small > svg { margin-left: 3px; }
.small.far > svg { margin-left: 8px; }

.rows { display: flex; flex-direction: column; gap: 8px; padding: 7px 4px 0; }
.line { display: flex; align-items: center; height: 23px; }
.line hr { flex: none; width: 1px; height: 22px; margin: 0 4px; border: 0; background: #d0d0d0; }
.tool { flex: none; width: 22px; height: 23px; padding-bottom: 1px; font-size: 13px; }
.tool.on { background: #c5c5c5; padding: 0; }
.tool.up { padding-bottom: 10px; }
.tool.down { padding-top: 8px; }
.tool .it { font-style: italic; font-family: "Liberation Serif", serif; font-size: 15px; }
.tool .un { border-bottom: 1px solid #555; line-height: 14px; }
.arr { flex: none; width: 12px; height: 23px; }
.pick { position: relative; display: flex; flex: none; height: 23px; }
.pick select { width: 100%; appearance: none; padding-left: 2px; border: 1px solid #ababab; background: #fff; }
.pick svg { position: absolute; right: 5px; top: 10px; }
.pick.name { width: 157px; }
.pick.size { width: 41px; margin: 0 3px 0 -1px; }
.pick.fmt { width: 131px; }
.wen { flex-direction: column; font-size: 9px; line-height: 10px; }
.wen .zh { color: #3f7cba; font-weight: 700; font-size: 10px; line-height: 12px; }
.pct { font-size: 15px; }
.dec { flex-direction: column; align-items: flex-end; padding-right: 3px; font-size: 8px; line-height: 8px; font-weight: 600; }
.dec span { display: flex; align-items: center; gap: 1px; }
.align .content > .rows:first-child { width: 128px; }
.align .rows + .rows { border-left: 1px solid #d8d8d8; }
.texted { height: 64px; padding-left: 6px; }
.texted .small { height: 23px; padding-bottom: 0; }

.styles .big { width: 48px; margin: 0 6px; }
.styles .tbl { width: 56px; margin: 0; }
.tbl .last svg { position: absolute; right: -3px; top: 57px; }
.last { line-height: 14px; }
.gallery { display: flex; width: 230px; height: 62px; margin: 2px 0 0 4px; border: 1px solid #ababab; background: #fff; }
.swatches { display: grid; flex: 1; grid-template-columns: 106px 106px; grid-template-rows: 30px 30px; }
.swatches button { justify-content: flex-start; margin: 4px 3px; padding-left: 5px; font-size: 15px; line-height: 20px; color: #111; }
.swatches .bad { background: #ff99cc; color: #800080; }
.swatches .good { background: #ccffcc; color: #008000; }
.swatches .low { padding-bottom: 3px; }
.swatches .cur { margin: 1px 0; padding-left: 5px; border: 3px solid #c0c0c0; }
.gscroll { display: flex; flex-direction: column; width: 15px; border-left: 1px solid #ababab; }
.gscroll button { flex: 1; border-bottom: 1px solid #ababab; }
.gscroll button:last-child { border-bottom: 0; }
.gscroll .off { background: #e1e1e1; }
.gscroll .off svg { color: #bbb; }
.flip { transform: rotate(180deg); }
.all svg { border-top: 1px solid #666; height: 6px; padding-top: 2px; }
.cells .content { padding-left: 4px; }
.edit .content { padding-left: 7px; }
.edit .stack { width: 86px; flex: none; }
.edit .big { width: 65px; }
.invoice .big { width: 54px; }
.collapse { align-self: flex-end; margin: 0 4px 5px auto; }

.formula { display: flex; flex: none; height: 48px; padding: 10px 0 0 5px; font: 14px/20px "Noto Sans CJK SC", sans-serif; }
.formula > label, .fx { display: flex; align-items: center; height: 28px; border: 1px solid #c3c3c3; background: #fdfdfd; }
.formula input { padding-bottom: 2px; }
.ref { width: 124px; padding-right: 5px; }
.ref input { flex: 1; min-width: 0; padding-left: 6px; }
.dots { display: flex; flex-direction: column; justify-content: center; gap: 2px; width: 30px; height: 28px; align-items: center; }
.dots i { width: 2px; height: 2px; background: #a5a5a5; }
.fx { width: 110px; margin-right: 3px; }
.fx button { flex: 1; height: 26px; }
.fx .f { padding-bottom: 2px; font: 700 16px/20px "Liberation Serif", serif; }
.f .x { font-size: 11px; padding-top: 3px; }
.entry { flex: 1; padding-right: 4px; border-right: 0 !important; }
.entry input { flex: 1; padding-left: 10px; outline: 0; }

.sheet { display: flex; flex: 1; min-height: 0; }
.grid { position: relative; flex: 1; min-width: 0; overflow: hidden; }
table { width: 100%; table-layout: fixed; border-collapse: separate; border-spacing: 0; background: #fff; }
.rowcol { width: 20px; }
th { padding: 0; background: #e6e6e6; color: #222; font: 9px/9px "Noto Sans", sans-serif; }
thead th { height: 12px; border-right: 1px solid #aaa; border-bottom: 1px solid #999; }
thead th:last-child { border-right: 0; }
thead .sel { background: #d2d2d2; color: #217346; border-bottom: 2px solid #217346; }
.corner svg { margin-left: 12px; }
tbody th { height: 25px; vertical-align: bottom; border-right: 1px solid #999; border-bottom: 1px solid #bbb; }
tbody .sel { background: #d2d2d2; color: #217346; border-right: 2px solid #217346; }
td { height: 25px; padding: 0; text-align: center; white-space: nowrap; border-right: 1px solid #d4d4d4; border-bottom: 1px solid #d4d4d4; color: #111; font: 300 14px/20px "Noto Sans CJK SC", sans-serif; }
td:last-child { border-right-color: #999; }
.num { padding-top: 1px; font-size: 13px; }
.red { color: #f00; }
.serif { padding-top: 2px; font: 700 14px/20px "Liberation Serif", serif; }
.picked { position: relative; }
.picked::before { content: ""; position: absolute; inset: -2px -2px -2px -2px; border: 2px solid #217346; z-index: 1; }
.picked::after { content: ""; position: absolute; right: -3px; bottom: -3px; width: 6px; height: 6px; border: 1px solid #fff; border-width: 1px 0 0 1px; background: #217346; z-index: 2; }
.cursor { position: absolute; left: 2px; top: 16px; z-index: 3; }

.vscroll { display: flex; flex-direction: column; width: 12px; margin: 2px 0 1px 3px; }
.vscroll button { height: 15px; flex: none; border: 1px solid #ababab; border-right: 0; background: #fff; }
.vscroll button:last-child { height: 12px; }
.track { flex: 1; background: #dadada; }
.thumb { height: 25%; border: 1px solid #ababab; border-right: 0; background: #fff; }

.tabs { position: relative; display: flex; flex: none; height: 28px; border-top: 1px solid #999; }
.nav { display: flex; gap: 24px; width: 100px; padding: 0 0 2px 27px; flex: none; }
ul { display: flex; margin: 0; padding: 0; list-style: none; font-size: 13px; border-left: 0; }
li { display: flex; }
li button { padding: 0 12px 3px 11px; }
.plain { height: 20px; margin-top: 3px; border-right: 1px solid #999; }
.plain:first-child, .tint + .plain { border-left: 1px solid #999; }
.latin button { padding: 0 13px 3px; }
.tint { height: 22px; margin: 2px 2px 0 1px; color: #111; font-weight: 500; }
.orange { background: #f4b083; }
.orange button { padding: 0 10px 2px; }
.blue { background: #bdd7ee; }
.active { height: 25px; margin-top: -1px; padding-top: 1px; background: #fff; color: #217346; font-weight: 500; border: solid #999; border-width: 0 1px; box-shadow: inset 0 -2px #217346; }
.active button { padding-bottom: 3px; }
.add { width: 82px; }
.tabs .dots { margin-left: auto; }
.hscroll { display: flex; width: 30%; height: 16px; margin: 6px 14px 0 0; background: #dadada; }
.hscroll button { width: 16px; border: 1px solid #ababab; background: #fff; }
.hthumb { width: 17px; margin-left: -1px; border: 1px solid #ababab; background: #fff; }
.hscroll .end { margin-left: auto; }

.status { display: flex; flex: none; align-items: center; height: 16px; padding: 2px 20px 0 7px; border-top: 1px solid #c0c0c0; background: #f1f1f1; overflow: hidden; line-height: 14px; }
.status > span { margin-right: 19px; }
.status > svg { margin-left: -1px; }
.views { display: flex; margin-left: auto; }
.views button { width: 38px; height: 16px; }
.views .on { background: #c8c8c8; }
.views button svg { margin-top: 2px; }
.zoom { width: 14px; height: 14px; }
.slider { width: 100px; height: 14px; appearance: none; background: linear-gradient(#999, #999) center / 100% 1px no-repeat, linear-gradient(#999, #999) center / 1px 5px no-repeat; }
.slider::-webkit-slider-thumb { appearance: none; width: 4px; height: 12px; background: #666; }
.status .pctg { margin: 0 0 0 12px; font-size: 13px; }

.ime { position: absolute; right: 75px; bottom: 16px; display: flex; width: 226px; height: 31px; align-items: flex-end; }
.ime .logo { position: absolute; left: 0; top: 0; }
.imebar { display: flex; flex: 1; height: 26px; margin-left: 20px; padding-left: 12px; align-items: center; background: #fff; border: 1px solid #b8cdea; }
.imebar span { display: flex; width: 24px; justify-content: center; }
.imebar .zh { color: #0a6cd6; font-size: 16px; font-weight: 700; }

.mark { position: absolute; right: 10px; bottom: 8px; display: flex; gap: 0; opacity: .72; }
.mark div { display: flex; flex-direction: column; margin-left: -2px; }
.mark strong { font: 500 21px/24px "Noto Sans CJK SC", sans-serif; color: #4a90d0; }
.mark span { font: 700 16px/18px "Liberation Sans", sans-serif; color: #4bb35c; }
</style>
